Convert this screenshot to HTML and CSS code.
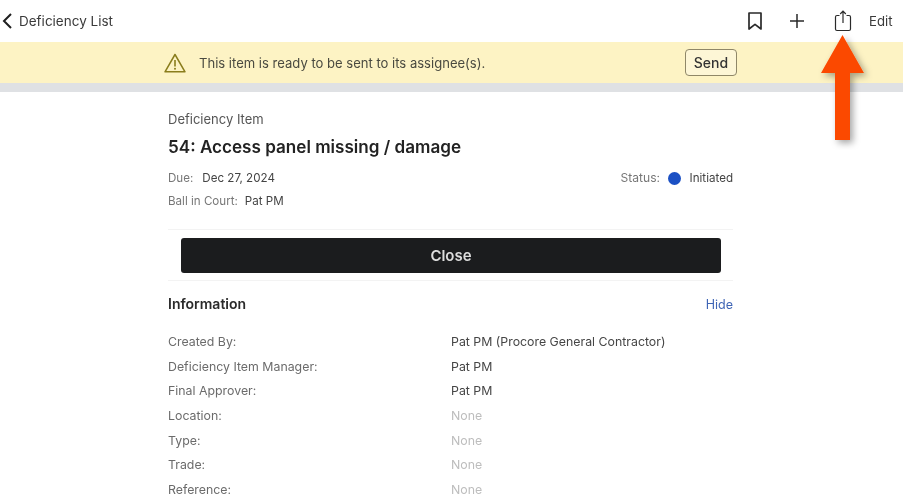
FILE: index.html
```html
<!DOCTYPE html>
<html lang="en">
<head>
<meta charset="utf-8">
<title>Deficiency Item</title>
<link rel="stylesheet" href="styles.css">
</head>
<body>
<header class="topbar">
  <div class="back">
    <svg class="chevron" width="12" height="18" viewBox="0 0 12 18"><path d="M10 2 3 9l7 7" fill="none" stroke="#1f1f1f" stroke-width="2"/></svg>
    <span>Deficiency List</span>
  </div>
  <div class="actions">
    <svg class="icon-bookmark" width="16" height="20" viewBox="0 0 16 20"><path d="M2 2h12v16l-6-4.600L2 18z" fill="none" stroke="#2a2a2a" stroke-width="1.700" stroke-linejoin="round"/></svg>
    <svg class="icon-plus" width="16" height="16" viewBox="0 0 16 16"><path d="M8 1v14M1 8h14" stroke="#2a2a2a" stroke-width="1.500" fill="none"/></svg>
    <svg class="icon-share" width="18" height="22" viewBox="0 0 18 22"><path d="M5.500 5.500H3A1.500 1.500 0 0 0 1.500 7v12A1.500 1.500 0 0 0 3 20.500h12a1.500 1.500 0 0 0 1.500-1.500V7A1.500 1.500 0 0 0 15 5.500h-2.500M9 13V1.500M6.200 4 9 1.200 11.800 4" fill="none" stroke="#2a2a2a" stroke-width="1.200"/></svg>
    <span class="edit">Edit</span>
  </div>
</header>
<section class="banner">
  <div class="banner-inner">
    <div class="banner-msg">
      <svg width="22" height="20" viewBox="0 0 22 20"><path d="M11 1.500 1 18.800h20z" fill="none" stroke="#8a7d1c" stroke-width="1.500" stroke-linejoin="round"/><path d="M11 7v6.500" stroke="#8a7d1c" stroke-width="1.600"/><circle cx="11" cy="15.800" r="1" fill="#8a7d1c"/></svg>
      <span>This item is ready to be sent to its assignee(s).</span>
    </div>
    <button class="send">Send</button>
  </div>
</section>
<div class="band"></div>
<main class="content">
  <p class="eyebrow">Deficiency Item</p>
  <h1 class="title">54: Access panel missing / damage</h1>
  <div class="meta-row">
    <div class="meta"><span class="meta-label due-label">Due:</span><span class="meta-value">Dec 27, 2024</span></div>
    <div class="meta status"><span class="meta-label">Status:</span><span class="dot"></span><span class="meta-value">Initiated</span></div>
  </div>
  <div class="meta ball"><span class="meta-label">Ball in Court:</span><span class="meta-value">Pat PM</span></div>
  <div class="close-wrap"><button class="close">Close</button></div>
  <div class="info-head">
    <h2>Information</h2>
    <a class="hide">Hide</a>
  </div>
  <dl class="info">
    <dt>Created By:</dt><dd>Pat PM (Procore General Contractor)</dd>
    <dt>Deficiency Item Manager:</dt><dd>Pat PM</dd>
    <dt>Final Approver:</dt><dd>Pat PM</dd>
    <dt>Location:</dt><dd class="none">None</dd>
    <dt>Type:</dt><dd class="none">None</dd>
    <dt>Trade:</dt><dd class="none">None</dd>
    <dt>Reference:</dt><dd class="none">None</dd>
  </dl>
</main>
<svg class="arrow" width="70" height="120" viewBox="0 0 70 120"><defs><filter id="s" x="-40%" y="-20%" width="180%" height="140%"><feDropShadow dx="3" dy="3" stdDeviation="3.500" flood-color="#000" flood-opacity=".35"/></filter></defs><path d="M34.500 5 56 43H42v67H27V43H13z" fill="#fb4a02" filter="url(#s)"/></svg>
</body>
</html>
```
FILE: styles.css
```css
* { box-sizing: border-box; }
html, body { margin: 0; height: 501px; overflow: hidden; }
body { background: #fff; font-family: Inter, "Liberation Sans", sans-serif; color: #333; position: relative; filter: blur(.35px); }
.topbar { height: 42px; display: flex; justify-content: space-between; align-items: center; padding: 0 9px 0 1px; }
.back { display: flex; align-items: center; gap: 6px; font-size: 13.500px; color: #3a3a3a; }
.actions { display: flex; align-items: center; }
.icon-bookmark { margin-right: 26px; }
.icon-plus { margin-right: 29px; }
.icon-share { margin-right: 17px; margin-top: -1px; }
.edit { font-size: 13.200px; color: #3a3a3a; width: 25px; }
.banner { height: 41px; background: #fdf3c4; }
.banner-inner { width: 575px; margin: 0 auto; height: 100%; display: flex; justify-content: space-between; align-items: center; padding-right: 2px; }
.banner-msg { display: flex; align-items: center; gap: 13px; font-size: 13.050px; color: #4a4a40; }
.send { width: 52px; height: 27px; border: 1.500px solid #8f8768; border-radius: 4px; background: #fdf6d6; font: 500 14px Inter, sans-serif; color: #333; padding: 0; }
.band { height: 9px; background: #dfe1e4; }
.content { width: 565px; margin-left: 168px; padding-top: 19px; }
.eyebrow { margin: 0; font-size: 13px; line-height: 16px; color: #555; }
.title { margin: 9px 0 0; font-size: 17.100px; line-height: 22px; font-weight: 600; color: #222; }
.meta-row { display: flex; justify-content: space-between; margin-top: 12px; }
.meta { display: flex; align-items: center; font-size: 11.600px; line-height: 16px; }
.meta-label { color: #777; margin-right: 7px; }
.due-label { margin-right: 9px; }
.meta-value { color: #444; }
.status .meta-label { margin-right: 8px; font-size: 12.100px; }
.dot { width: 13px; height: 13px; border-radius: 50%; background: #1b50c4; margin-right: 8.500px; }
.ball { margin-top: 7px; }
.close-wrap { margin-top: 20px; padding: 8px 12px 7px 13px; border-top: 1px solid #f3f3f3; border-bottom: 1px solid #f3f3f3; }
.close { display: block; width: 100%; height: 35px; border: 0; border-radius: 3px; background: #1b1c1e; color: #ddd; font: 600 15px Inter, sans-serif; padding: 0; }
.info-head { display: flex; justify-content: space-between; align-items: center; margin-top: 13px; }
.info-head h2 { margin: 0; font-size: 14px; line-height: 20px; font-weight: 600; color: #2a2a2a; }
.hide { font-size: 12.500px; color: #3f65b5; }
.info { display: grid; grid-template-columns: 283px 1fr; grid-auto-rows: 24.700px; margin: 15px 0 0; font-size: 12.350px; align-items: center; }
.info dt { color: #6b6b6b; }
.info dd { margin: 0; color: #454545; }
.info .none { color: #bdbdbd; }
.arrow { position: absolute; left: 808px; top: 30px; }
```
